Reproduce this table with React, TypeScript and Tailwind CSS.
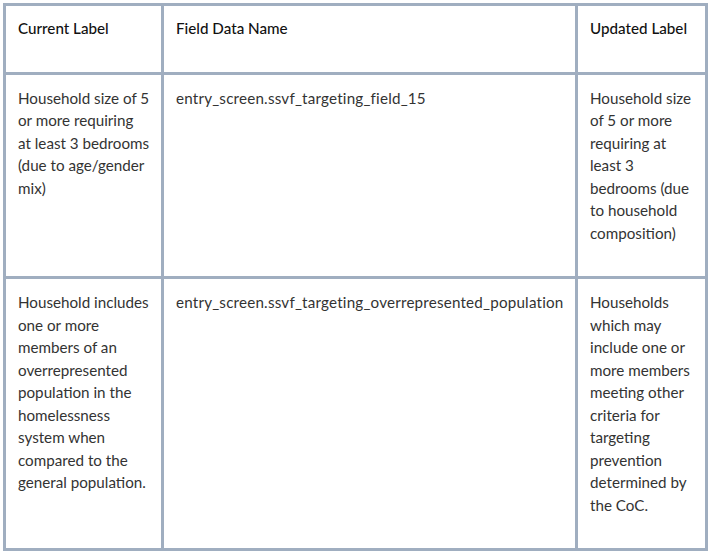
import React from 'react';

interface Row {
  current: string;
  field: string;
  updated: string;
}

const rows: Row[] = [
  {
    current: 'Household size of 5 or more requiring at\u00a0least 3 bedrooms (due to age/gender mix)',
    field: 'entry_screen.ssvf_targeting_field_15',
    updated: 'Household size of 5 or more requiring at least 3 bedrooms (due to household composition)',
  },
  {
    current:
      'Household includes one or more members of an overrepresented population in the homelessness system when compared to the general population.',
    field: 'entry_screen.ssvf_targeting_overrepresented_population',
    updated:
      'Households which may include one or more members meeting other criteria for targeting prevention determined by the CoC.',
  },
];

const headers = ['Current Label', 'Field Data Name', 'Updated Label'];

const App: React.FC = () => {
  return (
    <div className="bg-white w-[711px] h-[553px] pt-[3px] pl-[3px]" style={{ fontFamily: 'Lato, "Open Sans", sans-serif' }}>
      <div className="grid grid-cols-[155px_411px_127px] gap-[3px] p-[3px] bg-[#a0aec0] w-max text-[15.2px] leading-[22.5px]">
        {headers.map((h) => (
          <div key={h} className="bg-white px-3 pt-[11px] pb-8 font-medium text-[#111]">
            {h}
          </div>
        ))}
        {rows.map((row) => (
          <React.Fragment key={row.field}>
            <div className="bg-white pl-3 pr-[10px] pt-3 pb-8 text-[#333]">{row.current}</div>
            <div className="bg-white px-3 pt-3 pb-8 text-[#333] tracking-[0.2px]">{row.field}</div>
            <div className="bg-white px-3 pt-3 pb-8 text-[#333]">{row.updated}</div>
          </React.Fragment>
        ))}
      </div>
    </div>
  );
};

export default App;
